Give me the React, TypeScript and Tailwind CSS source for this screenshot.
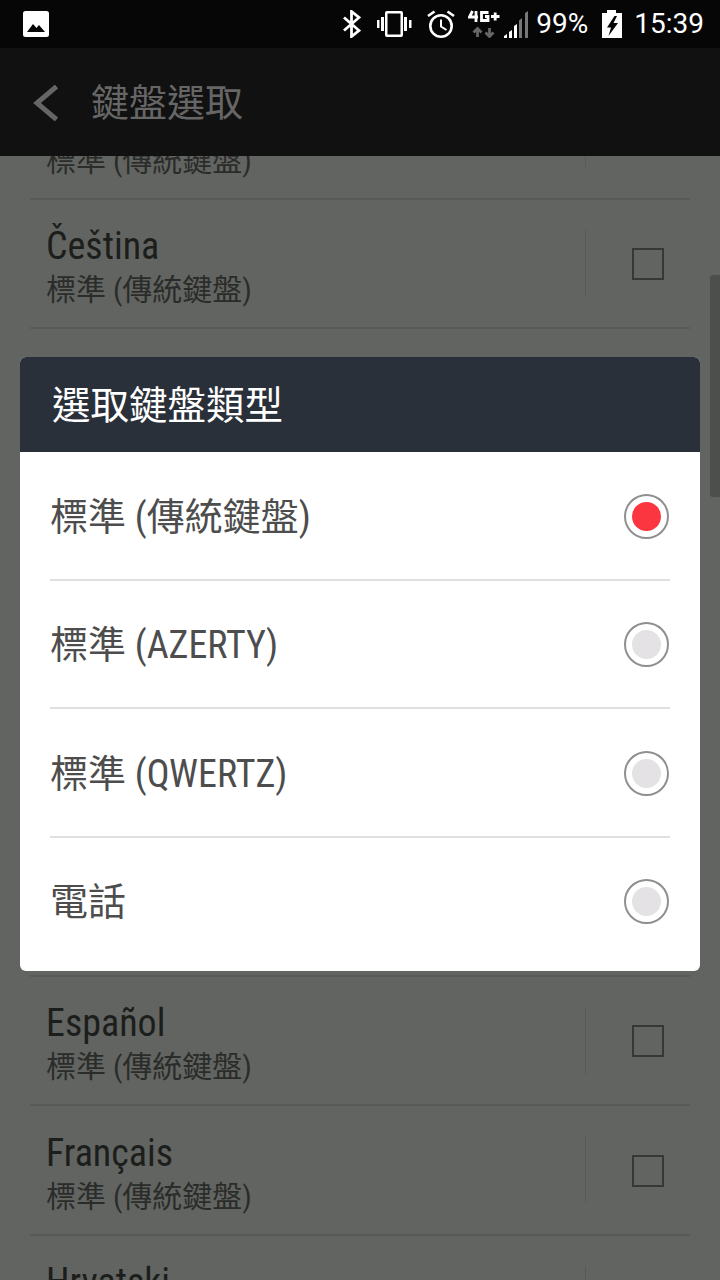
const FONT = "font-['Roboto','Noto_Sans_CJK_TC',sans-serif]";

const keyboardTypes = ['標準 (傳統鍵盤)', '標準 (AZERTY)', '標準 (QWERTZ)', '電話'];

function StatusIcons() {
  return (
    <div className="flex items-center">
      {/* bluetooth */}
      <svg width="18" height="28" viewBox="0 0 18 28" fill="none" stroke="white" strokeWidth="2.8">
        <path d="M1 7.500 L16 20.500 L8.500 26.500 V1.500 L16 7.500 L1 20.500" />
      </svg>
      {/* vibrate */}
      <svg width="35" height="28" viewBox="0 0 35 28" className="ml-[16px]" fill="white">
        <path
          fillRule="evenodd"
          d="M10 1h14a2 2 0 0 1 2 2v22a2 2 0 0 1-2 2H10a2 2 0 0 1-2-2V3a2 2 0 0 1 2-2z M10.500 3.500v21h13v-21z"
        />
        <rect x="4" y="7" width="3" height="14" />
        <rect x="0" y="10" width="2.500" height="8" />
        <rect x="27" y="7" width="3" height="14" />
        <rect x="32" y="10" width="2.500" height="8" />
      </svg>
      {/* alarm */}
      <svg width="28" height="28" viewBox="0 0 28 28" fill="none" stroke="white" strokeWidth="2.6" className="ml-[15px]">
        <circle cx="14" cy="16" r="10.700" />
        <path d="M14 9.500v7l5.500 3.500" strokeWidth="2" />
        <path d="M1 6 L7.500 1.500M27 6 L20.500 1.500" />
      </svg>
      {/* 4G+ with data arrows */}
      <svg width="32" height="28" viewBox="0 0 32 28" fill="none" className="ml-[13px]">
        <path d="M4.500 1 L1.500 7 H10M8 1v11" stroke="white" strokeWidth="2.800" />
        <path d="M20.500 2.500 H13.500 V10.500 H20 V6.500 H17" stroke="white" strokeWidth="2.800" />
        <path d="M23 6.500 H31.500M27.200 2.500v8" stroke="white" strokeWidth="2.800" />
        <path d="M9.500 27V19M5.500 22.500l4-4 4 4" stroke="#666" strokeWidth="2.800" />
        <path d="M21.500 18v8M17.500 22.500l4 4 4-4" stroke="#666" strokeWidth="2.800" />
      </svg>
      {/* signal */}
      <svg width="24" height="27" viewBox="0 0 24 27" className="ml-[4px]">
        <path d="M0 27v-2l3-2v4z" fill="white" />
        <path d="M5 27v-6l3-2v8z" fill="white" />
        <path d="M10 27V15l3-2v14z" fill="white" />
        <path d="M15 27V9.500l3-2.500v20z" fill="#777" />
        <path d="M21 27V2l3-2v27z" fill="#777" />
      </svg>
      <span className="ml-[8px] text-[28px] leading-none text-white">99%</span>
      {/* charging battery */}
      <svg width="20" height="28" viewBox="0 0 20 28" className="ml-[14px]">
        <path
          fillRule="evenodd"
          fill="white"
          d="M5 0h9v3h6v25H0V3h5z M12.500 6 L5 17.500 H9 L6.500 26 L16 13 H11.500 L15 6z"
        />
      </svg>
      <span className="ml-[12px] text-[28px] leading-none text-white">15:39</span>
    </div>
  );
}

function LanguageRow({ name }: { name: string }) {
  return (
    <div className="mx-[30px] flex h-[129.5px] shrink-0 items-center border-b-2 border-[#585a57] pl-[16px]">
      <div className="min-w-0 flex-1 pt-[8px]">
        <div className="h-[46px] whitespace-nowrap text-[38px] leading-[46px] text-[#1c1e1c] [font-stretch:75%]">
          {name}
        </div>
        <div className="whitespace-nowrap text-[30px] leading-[42px] text-[#2a2c2a] [font-stretch:75%]">
          標準 (傳統鍵盤)
        </div>
      </div>
      <div className="h-[67px] w-px bg-[#585a57]" />
      <div className="w-[104px] pl-[46px] pt-[2px]">
        <div className="h-[32px] w-[32px] border-2 border-[#363836]" />
      </div>
    </div>
  );
}

export default function App() {
  return (
    <div className={`relative flex h-[1280px] w-[720px] flex-col overflow-hidden bg-[#626461] ${FONT}`}>
      <div className="flex h-[48px] shrink-0 items-center justify-between bg-[#060606] pl-[23px] pr-[16px]">
        <svg width="26" height="26" viewBox="0 0 26 26">
          <path
            fillRule="evenodd"
            fill="white"
            d="M2.500 0h21a2.500 2.500 0 0 1 2.500 2.500v21a2.500 2.500 0 0 1-2.500 2.500h-21a2.500 2.500 0 0 1-2.500-2.500v-21a2.500 2.500 0 0 1 2.500-2.500z M4 21h18l-6-7-2.500 3-3.500-4z"
          />
        </svg>
        <StatusIcons />
      </div>

      <div className="flex h-[108px] shrink-0 items-center bg-[#111111] pt-[2px]">
        <svg width="25" height="36" viewBox="0 0 25 36" fill="none" stroke="#666666" strokeWidth="5" className="ml-[33px]">
          <path d="M23.500 1.500 L4 18 L23.500 34.500" />
        </svg>
        <span className="ml-[33px] text-[38px] text-[#666666]">鍵盤選取</span>
      </div>

      <div className="min-h-0 flex-1 overflow-hidden">
        <div className="-mt-[86px] flex flex-col">
          {/* first row: its name is scrolled away under the app bar */}
          <LanguageRow name="" />
          <LanguageRow name="Čeština" />
          {/* rows under the dialog */}
          <div className="mx-[30px] h-[647.5px] shrink-0 border-b-2 border-[#585a57]" />
          <LanguageRow name="Español" />
          <LanguageRow name="Français" />
          <LanguageRow name="Hrvatski" />
        </div>
      </div>

      {/* scrollbar */}
      <div className="absolute right-0 top-[275px] h-[222px] w-[10px] rounded-l-[3px] bg-[#4d4f4c]" />

      <div className="absolute left-[20px] top-[357px] w-[680px] overflow-hidden rounded-[6px] bg-white pb-[5px]">
        <div className="flex h-[95px] items-center bg-[#2a303a] pl-[32px] pt-[3px] text-[38.500px] text-white">
          選取鍵盤類型
        </div>
        <div className="px-[30px]">
          {keyboardTypes.map((type, i) => (
            <div
              key={type}
              className={`flex h-[128.5px] items-center justify-between ${i < 3 ? 'border-b-2 border-[#e0e0e0] pt-[2px]' : ''}`}
            >
              <span className="whitespace-nowrap pt-[2px] text-[38px] text-[#4d4d4d] [font-stretch:75%]">{type}</span>
              <div className="mr-[1px] flex h-[45px] w-[45px] items-center justify-center rounded-full border-2 border-[#8f8f8f]">
                <div className={`h-[29px] w-[29px] rounded-full ${i === 0 ? 'bg-[#fb3640]' : 'bg-[#e5e2e5]'}`} />
              </div>
            </div>
          ))}
        </div>
      </div>
    </div>
  );
}
